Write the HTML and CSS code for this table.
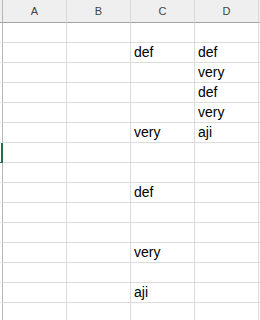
FILE: index.html
```html
<!DOCTYPE html>
<html>
<head>
<meta charset="utf-8">
<link rel="stylesheet" href="styles.css">
</head>
<body>
<div class="sheet">
  <div class="rh hdr"></div><div class="ch">A</div><div class="ch">B</div><div class="ch">C</div><div class="ch">D</div><div class="ch rest"></div>

  <div class="rh"></div><div class="c"></div><div class="c"></div><div class="c"></div><div class="c"></div><div class="c rest"></div>
  <div class="rh"></div><div class="c"></div><div class="c"></div><div class="c">def</div><div class="c">def</div><div class="c rest"></div>
  <div class="rh"></div><div class="c"></div><div class="c"></div><div class="c"></div><div class="c">very</div><div class="c rest"></div>
  <div class="rh"></div><div class="c"></div><div class="c"></div><div class="c"></div><div class="c">def</div><div class="c rest"></div>
  <div class="rh"></div><div class="c"></div><div class="c"></div><div class="c"></div><div class="c">very</div><div class="c rest"></div>
  <div class="rh"></div><div class="c"></div><div class="c"></div><div class="c">very</div><div class="c">aji</div><div class="c rest"></div>
  <div class="rh sel"></div><div class="c"></div><div class="c"></div><div class="c"></div><div class="c"></div><div class="c rest"></div>
  <div class="rh"></div><div class="c"></div><div class="c"></div><div class="c"></div><div class="c"></div><div class="c rest"></div>
  <div class="rh"></div><div class="c"></div><div class="c"></div><div class="c">def</div><div class="c"></div><div class="c rest"></div>
  <div class="rh"></div><div class="c"></div><div class="c"></div><div class="c"></div><div class="c"></div><div class="c rest"></div>
  <div class="rh"></div><div class="c"></div><div class="c"></div><div class="c"></div><div class="c"></div><div class="c rest"></div>
  <div class="rh"></div><div class="c"></div><div class="c"></div><div class="c">very</div><div class="c"></div><div class="c rest"></div>
  <div class="rh"></div><div class="c"></div><div class="c"></div><div class="c"></div><div class="c"></div><div class="c rest"></div>
  <div class="rh"></div><div class="c"></div><div class="c"></div><div class="c">aji</div><div class="c"></div><div class="c rest"></div>
  <div class="rh"></div><div class="c"></div><div class="c"></div><div class="c"></div><div class="c"></div><div class="c rest"></div>
</div>
</body>
</html>
```

FILE: styles.css
```css
html, body {
  margin: 0;
  padding: 0;
  background: #ffffff;
  overflow: hidden;
}
.sheet {
  display: grid;
  grid-template-columns: 3px 64px 64px 64px 64px 1fr;
  grid-template-rows: 23px repeat(15, 20px);
  width: 260px;
  font-family: "Liberation Sans", Arial, sans-serif;
}
.sheet > div {
  box-sizing: border-box;
  overflow: hidden;
  white-space: nowrap;
}
.rh {
  border-right: 1px solid #b8b8b8;
  border-bottom: 1px solid #e6e6e6;
  background: #ffffff;
}
.rh.hdr {
  background: #efefef;
  border-bottom: 1px solid #a3a3a3;
}
.rh.sel {
  background: linear-gradient(to right, transparent 1px, #217346 1px);
  border-right-color: #217346;
  border-bottom-color: #217346;
}
.ch {
  background: #efefef;
  border-right: 1px solid #dadada;
  border-bottom: 1px solid #a3a3a3;
  color: #444444;
  font-size: 11px;
  line-height: 22px;
  text-align: center;
}
.c {
  border-right: 1px solid #dcdcdc;
  border-bottom: 1px solid #dcdcdc;
  font-size: 14px;
  line-height: 19px;
  padding-left: 3px;
  color: #000000;
}
.rest {
  border-right: none;
}
```
